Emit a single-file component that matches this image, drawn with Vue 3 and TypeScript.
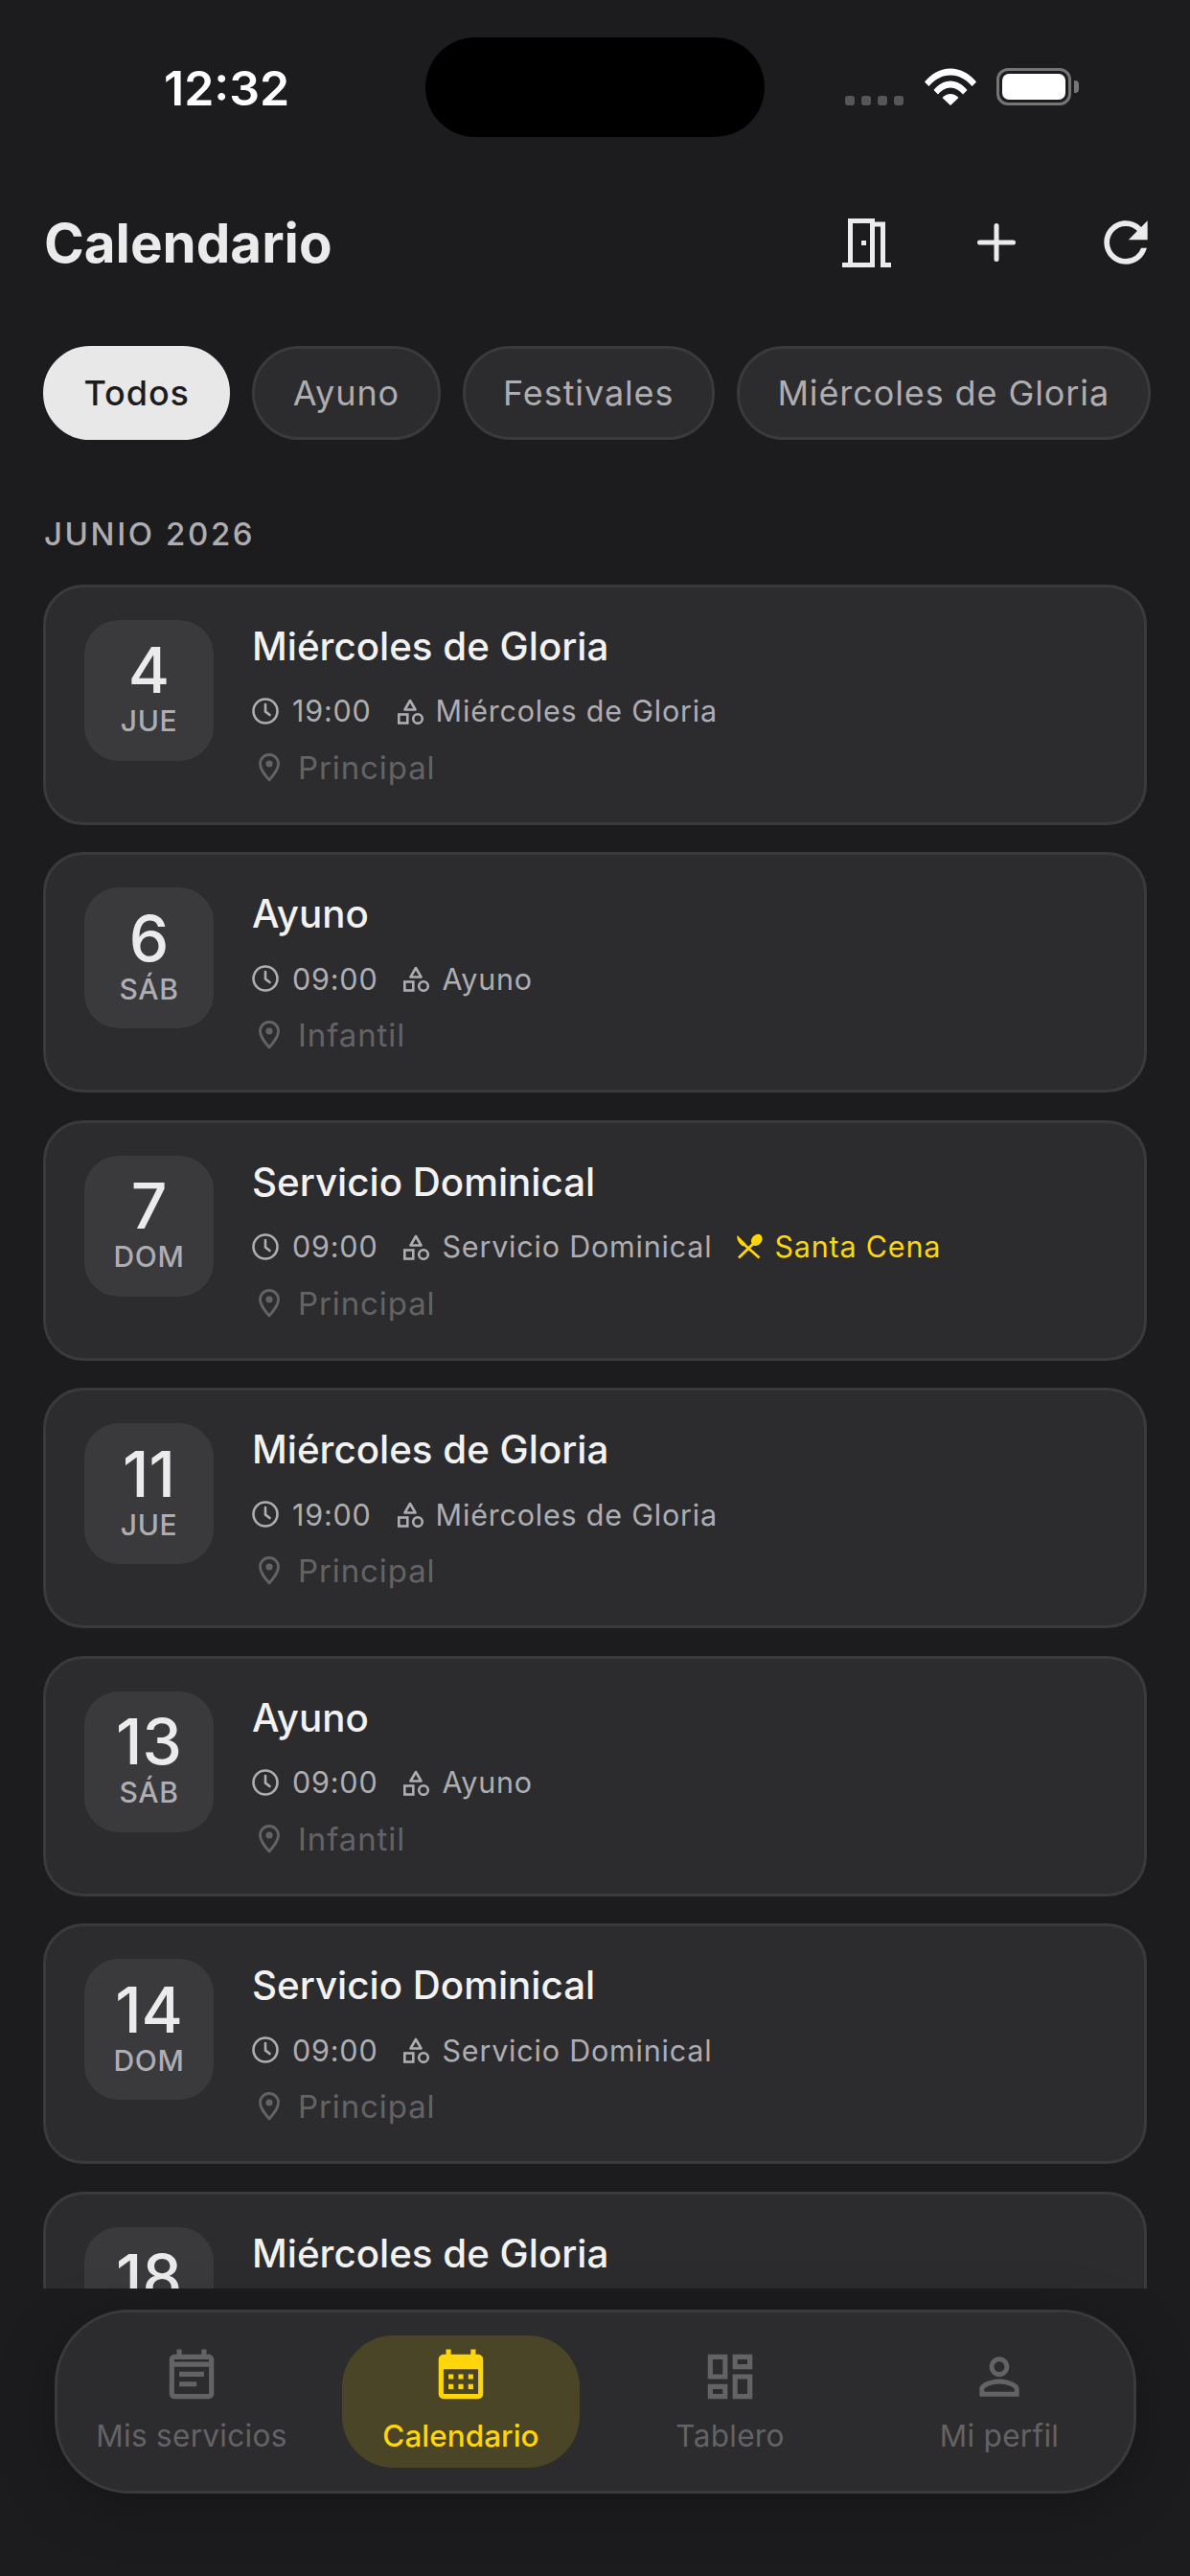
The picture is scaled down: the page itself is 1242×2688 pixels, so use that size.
<script setup lang="ts">
interface ServiceEvent {
  day: number
  weekday: string
  title: string
  time: string
  category: string
  place: string
  supper?: boolean
}

const filters = ['Todos', 'Ayuno', 'Festivales', 'Miércoles de Gloria']

const events: ServiceEvent[] = [
  { day: 4, weekday: 'JUE', title: 'Miércoles de Gloria', time: '19:00', category: 'Miércoles de Gloria', place: 'Principal' },
  { day: 6, weekday: 'SÁB', title: 'Ayuno', time: '09:00', category: 'Ayuno', place: 'Infantil' },
  { day: 7, weekday: 'DOM', title: 'Servicio Dominical', time: '09:00', category: 'Servicio Dominical', place: 'Principal', supper: true },
  { day: 11, weekday: 'JUE', title: 'Miércoles de Gloria', time: '19:00', category: 'Miércoles de Gloria', place: 'Principal' },
  { day: 13, weekday: 'SÁB', title: 'Ayuno', time: '09:00', category: 'Ayuno', place: 'Infantil' },
  { day: 14, weekday: 'DOM', title: 'Servicio Dominical', time: '09:00', category: 'Servicio Dominical', place: 'Principal' },
  { day: 18, weekday: 'JUE', title: 'Miércoles de Gloria', time: '19:00', category: 'Miércoles de Gloria', place: 'Principal' },
]
</script>

<template>
  <div class="screen">
    <div class="status">
      <span class="clock">12:32</span>
      <div class="island"></div>
      <div class="status-icons">
        <div class="signal"><i></i><i></i><i></i><i></i></div>
        <svg class="wifi" viewBox="0 0 54 39" fill="#fff">
          <path d="M0 14.5C7 6 16.5 0.5 27 0.5S47 6 54 14.5L49.5 19C43.5 12 36 7.5 27 7.5S10.5 12 4.5 19Z" />
          <path d="M9.5 23C14 17.5 20 13.5 27 13.5S40 17.5 44.5 23L40 27.5C36.5 23.5 32 20.5 27 20.5S17.5 23.5 14 27.5Z" />
          <path d="M18.5 31C21 28.5 24 27 27 27S33 28.5 35.5 31L27 39Z" />
        </svg>
        <div class="battery"><div class="battery-fill"></div></div>
      </div>
    </div>

    <header class="header">
      <h1>Calendario</h1>
      <div class="actions">
        <svg class="door" viewBox="0 0 51 51" fill="#ebebeb">
          <path fill-rule="evenodd" d="M6 0H34V3.5H45V46H51V51H40V8.5H34V51H0V46H6ZM11 5V46H29V5Z" />
          <rect x="20" y="23" width="5" height="5" />
        </svg>
        <svg class="plus" viewBox="0 0 40 40" stroke="#ebebeb" stroke-width="5" stroke-linecap="round">
          <path d="M20 2.5V37.5M2.5 20H37.5" />
        </svg>
        <svg class="refresh" viewBox="0 0 24 24" fill="#ebebeb">
          <path d="M17.65 6.35A7.958 7.958 0 0 0 12 4c-4.42 0-7.99 3.58-7.99 8s3.57 8 7.99 8c3.73 0 6.84-2.55 7.73-6h-2.08A5.99 5.99 0 0 1 12 18c-3.31 0-6-2.69-6-6s2.69-6 6-6c1.66 0 3.14.69 4.22 1.78L13 11h7V4l-2.35 2.35z" />
        </svg>
      </div>
    </header>

    <div class="filters">
      <button v-for="(filter, i) in filters" :key="filter" :class="['chip', { active: i === 0 }]">{{ filter }}</button>
    </div>

    <div class="list">
      <div class="month">JUNIO 2026</div>
      <article v-for="event in events" :key="event.day" class="card">
        <div class="date">
          <span class="day">{{ event.day }}</span>
          <span class="weekday">{{ event.weekday }}</span>
        </div>
        <div class="info">
          <div class="title">{{ event.title }}</div>
          <div class="meta">
            <span class="meta-item">
              <svg class="meta-icon" viewBox="0 0 28 28" fill="none" stroke="#aeaeb2" stroke-width="2.6" stroke-linecap="round">
                <circle cx="14" cy="14" r="12.5" />
                <path d="M14 7V14.5L18.5 18" />
              </svg>
              {{ event.time }}
            </span>
            <span class="meta-item">
              <svg class="meta-icon" viewBox="0 0 28 28" fill="none" stroke="#aeaeb2" stroke-width="2.6">
                <path d="M13 3L18.5 12.5H7.5Z" stroke-linejoin="round" />
                <rect x="1.3" y="17.5" width="9" height="9" />
                <circle cx="21" cy="22" r="4.8" />
              </svg>
              {{ event.category }}
            </span>
            <span v-if="event.supper" class="meta-item supper">
              <svg class="meta-icon" viewBox="0 0 28 26" fill="#ffd60a" stroke="#ffd60a">
                <path d="M1.5 1L10.5 10L7.5 12.5C3.5 10 0.5 5.5 1.5 1Z" stroke="none" />
                <path d="M8 10L24.5 24.5" stroke-width="2.8" />
                <ellipse cx="21.8" cy="5.9" rx="5.2" ry="6.6" transform="rotate(40 21.8 5.9)" stroke="none" />
                <path d="M19 9L3 24.5" stroke-width="2.8" />
              </svg>
              Santa Cena
            </span>
          </div>
          <div class="place">
            <svg class="pin" viewBox="0 0 22 30" fill="none" stroke="#636366" stroke-width="2.8" stroke-linejoin="round">
              <path d="M11 28C6 22 1.5 17 1.5 11A9.5 9.5 0 0 1 20.5 11C20.5 17 16 22 11 28Z" />
              <circle cx="11" cy="11" r="3.6" fill="#636366" stroke="none" />
            </svg>
            {{ event.place }}
          </div>
        </div>
      </article>
    </div>

    <nav class="tabbar">
      <div class="tab">
        <svg class="tab-icon" viewBox="0 0 24 24" fill="#636366">
          <path d="M19 3h-1V1h-2v2H8V1H6v2H5c-1.11 0-1.99.9-1.99 2L3 19c0 1.1.89 2 2 2h14c1.1 0 2-.9 2-2V5c0-1.1-.9-2-2-2zm0 16H5V8h14v11zM5 6V5h14v1H5zm2 4h10v2H7zm0 4h7v2H7z" />
        </svg>
        <span>Mis servicios</span>
      </div>
      <div class="tab current">
        <svg class="tab-icon" viewBox="0 0 24 24" fill="#ffd60a">
          <path fill-rule="evenodd" d="M19 3h-1V1h-2v2H8V1H6v2H5c-1.1 0-2 .9-2 2v14c0 1.1.9 2 2 2h14c1.1 0 2-.9 2-2V5c0-1.1-.9-2-2-2zM5 9v10h14V9z" />
          <path d="M7 11h2v2H7zm4 0h2v2h-2zm4 0h2v2h-2zM7 15h2v2H7zm4 0h2v2h-2zm4 0h2v2h-2z" />
        </svg>
        <span>Calendario</span>
      </div>
      <div class="tab">
        <svg class="tab-icon" viewBox="0 0 24 24" fill="#636366">
          <path d="M19 5v2h-4V5h4M9 5v6H5V5h4m10 8v6h-4v-6h4M9 17v2H5v-2h4M21 3h-8v6h8V3zM11 3H3v10h8V3zm10 8h-8v10h8V11zm-10 4H3v6h8v-6z" />
        </svg>
        <span>Tablero</span>
      </div>
      <div class="tab">
        <svg class="tab-icon" viewBox="0 0 24 24" fill="#636366">
          <path d="M12 5.9c1.16 0 2.1.94 2.1 2.1s-.94 2.1-2.1 2.1S9.9 9.16 9.9 8s.94-2.1 2.1-2.1m0 9c2.97 0 6.1 1.46 6.1 2.1v1.1H5.9V17c0-.64 3.13-2.1 6.1-2.1M12 4C9.79 4 8 5.79 8 8s1.79 4 4 4 4-1.79 4-4-1.79-4-4-4zm0 9c-2.67 0-8 1.34-8 4v3h16v-3c0-2.66-5.33-4-8-4z" />
        </svg>
        <span>Mi perfil</span>
      </div>
    </nav>
  </div>
</template>

<style>
  html,
  body {
    margin: 0;
    background: #1c1c1e;
  }
</style>

<style scoped>
  .screen {
    position: relative;
    display: flex;
    flex-direction: column;
    width: 1242px;
    height: 2688px;
    overflow: hidden;
    background: #1c1c1e;
    color: #ebebeb;
    font-family: Inter, 'Liberation Sans', sans-serif;
  }

  .status {
    position: relative;
    flex: none;
    height: 184px;
  }

  .clock {
    position: absolute;
    left: 171px;
    top: 62px;
    color: #fff;
    font-size: 50px;
    line-height: 60px;
    font-weight: 600;
  }

  .island {
    position: absolute;
    left: 444px;
    top: 39px;
    width: 354px;
    height: 104px;
    border-radius: 52px;
    background: #000;
  }

  .status-icons {
    position: absolute;
    left: 882px;
    top: 71px;
    display: flex;
    align-items: flex-end;
    height: 39px;
  }

  .signal {
    display: flex;
    gap: 7px;
    margin-right: 22px;
  }

  .signal i {
    width: 10px;
    height: 10px;
    border-radius: 3px;
    background: #565656;
  }

  .wifi {
    width: 54px;
    height: 39px;
    margin-right: 21px;
  }

  .battery {
    position: relative;
    box-sizing: border-box;
    width: 78px;
    height: 39px;
    padding: 3px;
    border: 3px solid #757575;
    border-radius: 12px;
  }

  .battery::after {
    content: '';
    position: absolute;
    left: 78px;
    top: 10px;
    width: 5px;
    height: 13px;
    border-radius: 0 4px 4px 0;
    background: #757575;
  }

  .battery-fill {
    height: 100%;
    border-radius: 7px;
    background: #fff;
  }

  .header {
    flex: none;
    display: flex;
    align-items: center;
    justify-content: space-between;
    height: 138px;
    padding: 0 45px 0 46px;
  }

  .header h1 {
    margin: 0;
    font-size: 56.5px;
    font-weight: 700;
  }

  .actions {
    display: flex;
    align-items: center;
  }

  .door {
    width: 51px;
    height: 51px;
    margin-right: 90px;
  }

  .plus {
    width: 40px;
    height: 40px;
    margin-right: 81px;
  }

  .refresh {
    width: 68px;
    height: 68px;
    margin-right: -12px;
  }

  .filters {
    flex: none;
    display: flex;
    gap: 23px;
    padding: 0 45px;
    margin-top: 39px;
  }

  .chip {
    box-sizing: border-box;
    height: 98px;
    padding: 0 39.5px;
    border: 3px solid #3a3a3c;
    border-radius: 49px;
    background: #2c2c2e;
    color: #aeaeb2;
    font-family: inherit;
    font-size: 36px;
    letter-spacing: 0.9px;
    white-space: nowrap;
  }

  .chip.active {
    border-color: #e8e8e8;
    background: #e8e8e8;
    color: #1c1c1e;
    font-weight: 500;
  }

  .list {
    flex: none;
    height: 1929px;
    overflow: hidden;
    padding: 0 45px;
  }

  .month {
    margin-top: 76px;
    height: 45px;
    line-height: 45px;
    margin-bottom: 29.5px;
    padding-left: 1px;
    color: #aeaeb2;
    font-size: 33px;
    font-weight: 500;
    letter-spacing: 2.6px;
  }

  .card {
    box-sizing: border-box;
    display: flex;
    gap: 40px;
    height: 251px;
    margin-bottom: 28.5px;
    padding: 34px 40px;
    border: 3px solid #3a3a3c;
    border-radius: 42px;
    background: #2c2c2e;
  }

  .date {
    flex: none;
    box-sizing: border-box;
    display: flex;
    flex-direction: column;
    align-items: center;
    justify-content: center;
    width: 135px;
    height: 147px;
    padding-bottom: 7px;
    border-radius: 36px;
    background: #3a3a3c;
  }

  .day {
    font-size: 66px;
    line-height: 72px;
    font-weight: 500;
  }

  .weekday {
    margin-top: -1px;
    color: #aeaeb2;
    font-size: 30px;
    line-height: 36px;
    font-weight: 500;
    letter-spacing: 0.6px;
  }

  .title {
    height: 56px;
    color: #f2f2f2;
    font-size: 40.3px;
    line-height: 56px;
    font-weight: 500;
  }

  .meta {
    display: flex;
    gap: 27px;
    margin-top: 11px;
    height: 56px;
    align-items: center;
    color: #aeaeb2;
    font-size: 30.5px;
    letter-spacing: 0.8px;
  }

  .meta-item {
    display: flex;
    align-items: center;
    gap: 12px;
  }

  .meta-item:first-child {
    gap: 14px;
  }

  .meta-icon {
    width: 28px;
    height: 28px;
  }

  .supper {
    margin-left: -2px;
    color: #ffd60a;
  }

  .place {
    display: flex;
    align-items: center;
    gap: 19px;
    height: 56px;
    margin-top: 3px;
    padding-left: 7px;
    color: #636366;
    font-size: 33px;
    letter-spacing: 0.9px;
  }

  .pin {
    width: 22px;
    height: 30px;
  }

  .tabbar {
    position: absolute;
    left: 57px;
    top: 2410px;
    box-sizing: border-box;
    display: flex;
    gap: 33px;
    width: 1129px;
    height: 192px;
    padding: 24px 16px;
    border: 3px solid #3a3a3c;
    border-radius: 78px;
    background: #2c2c2e;
    box-shadow: 0 12px 60px rgba(0, 0, 0, 0.25);
  }

  .tab {
    flex: 1;
    display: flex;
    flex-direction: column;
    align-items: center;
    padding-top: 12px;
    border-radius: 54px;
    color: #636366;
    font-size: 31.5px;
    letter-spacing: 0.3px;
  }

  .tab span {
    margin-top: 10px;
    line-height: 42px;
  }

  .tab.current {
    background: rgba(255, 214, 10, 0.15);
    color: #ffd60a;
    font-weight: 500;
    letter-spacing: 0;
  }

  .tab-icon {
    width: 62px;
    height: 62px;
  }
</style>
